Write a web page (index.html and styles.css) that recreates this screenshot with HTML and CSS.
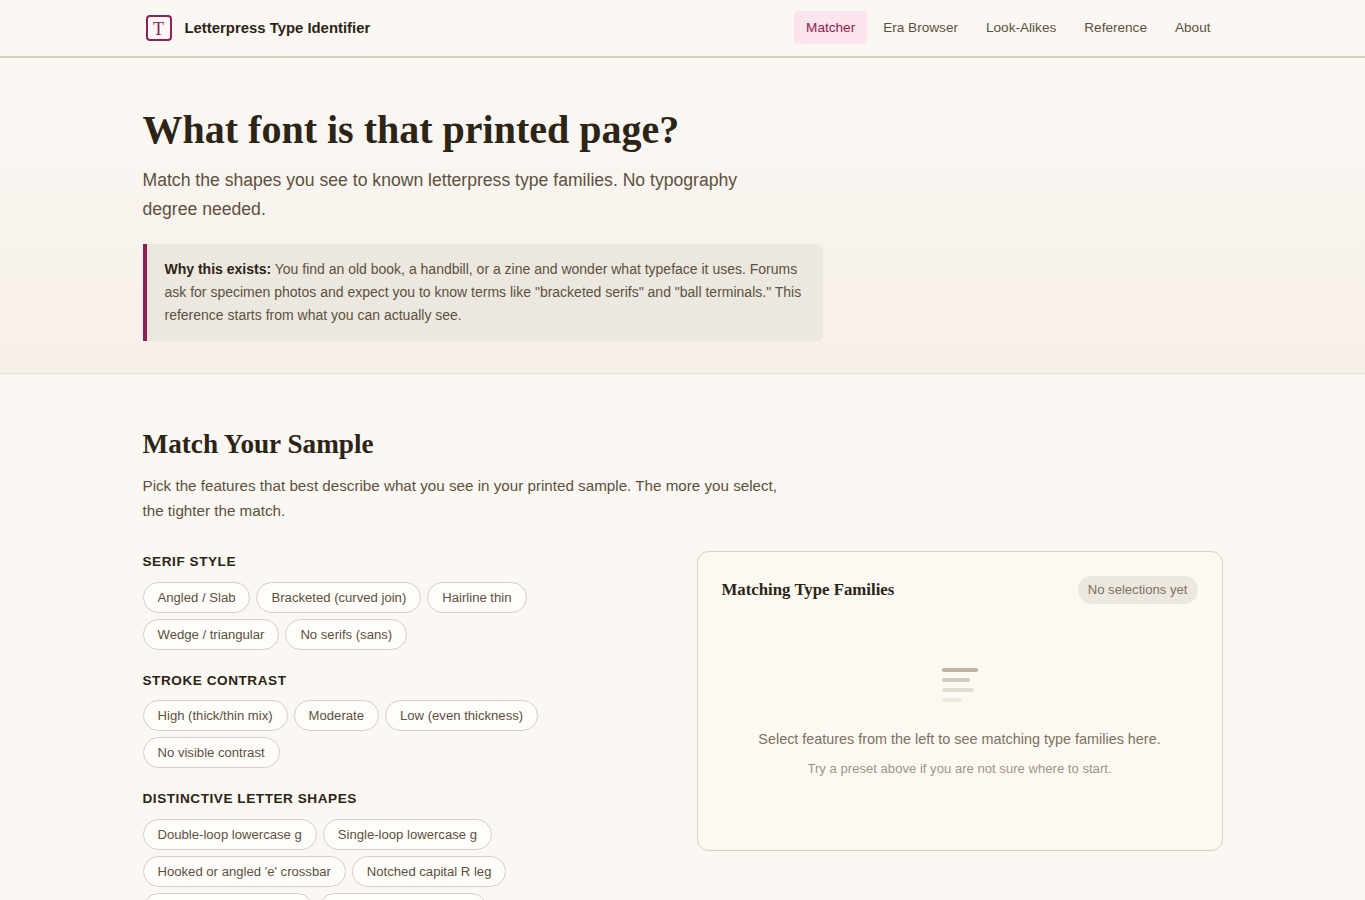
FILE: index.html
```html
<!DOCTYPE html>
<html lang="en">
<head>
    <meta charset="UTF-8">
    <meta name="viewport" content="width=device-width, initial-scale=1.0">
    <title>Letterpress Type Identifier</title>
    <link rel="stylesheet" href="styles.css">
</head>
<body>
    <header class="site-header">
        <div class="container header-inner">
            <a class="brand" href="#">
                <span class="brand-mark">T</span>
                <span class="brand-name">Letterpress Type Identifier</span>
            </a>
            <nav class="main-nav">
                <a class="nav-link active" href="#">Matcher</a>
                <a class="nav-link" href="#">Era Browser</a>
                <a class="nav-link" href="#">Look-Alikes</a>
                <a class="nav-link" href="#">Reference</a>
                <a class="nav-link" href="#">About</a>
            </nav>
        </div>
    </header>

    <section class="hero">
        <div class="container">
            <h1>What font is that printed page?</h1>
            <p class="hero-sub">Match the shapes you see to known letterpress type families. No typography degree needed.</p>
            <div class="callout">
                <strong>Why this exists:</strong> You find an old book, a handbill, or a zine and wonder what typeface it uses. Forums ask for specimen photos and expect you to know terms like "bracketed serifs" and "ball terminals." This reference starts from what you can actually see.
            </div>
        </div>
    </section>

    <main class="container matcher">
        <h2>Match Your Sample</h2>
        <p class="matcher-intro">Pick the features that best describe what you see in your printed sample. The more you select, the tighter the match.</p>

        <div class="matcher-grid">
            <div class="filters">
                <div class="filter-group">
                    <h3>Serif Style</h3>
                    <div class="pills">
                        <button class="pill">Angled / Slab</button>
                        <button class="pill">Bracketed (curved join)</button>
                        <button class="pill">Hairline thin</button>
                        <button class="pill">Wedge / triangular</button>
                        <button class="pill">No serifs (sans)</button>
                    </div>
                </div>
                <div class="filter-group">
                    <h3>Stroke Contrast</h3>
                    <div class="pills">
                        <button class="pill">High (thick/thin mix)</button>
                        <button class="pill">Moderate</button>
                        <button class="pill">Low (even thickness)</button>
                        <button class="pill">No visible contrast</button>
                    </div>
                </div>
                <div class="filter-group">
                    <h3>Distinctive Letter Shapes</h3>
                    <div class="pills">
                        <button class="pill">Double-loop lowercase g</button>
                        <button class="pill">Single-loop lowercase g</button>
                        <button class="pill">Hooked or angled 'e' crossbar</button>
                        <button class="pill">Notched capital R leg</button>
                        <button class="pill">Ball terminals (a, c, g, s)</button>
                        <button class="pill">Tall ascenders on d, f, k</button>
                    </div>
                </div>
            </div>

            <aside class="results">
                <div class="results-head">
                    <h3>Matching Type Families</h3>
                    <span class="results-badge">No selections yet</span>
                </div>
                <div class="results-empty">
                    <svg class="empty-icon" width="36" height="36" viewBox="0 0 36 36" aria-hidden="true">
                        <rect x="0" y="0" width="36" height="4" rx="2" fill="#bdb3a3"/>
                        <rect x="0" y="10" width="28" height="4" rx="2" fill="#d2ccc0"/>
                        <rect x="0" y="20" width="32" height="4" rx="2" fill="#e3ded2"/>
                        <rect x="0" y="30" width="20" height="4" rx="2" fill="#eee9e0"/>
                    </svg>
                    <p class="empty-main">Select features from the left to see matching type families here.</p>
                    <p class="empty-hint">Try a preset above if you are not sure where to start.</p>
                </div>
            </aside>
        </div>
    </main>
</body>
</html>
```

FILE: styles.css
```css
* {
    box-sizing: border-box;
}

body {
    margin: 0;
    font-family: "Liberation Sans", Arial, sans-serif;
    background-color: #fbf8f3;
    color: #2c2416;
}

.container {
    width: 1080px;
    margin: 0 auto;
}

.site-header {
    height: 58px;
    border-bottom: 2px solid #d4cfbb;
}

.header-inner {
    height: 55px;
    display: flex;
    align-items: center;
    justify-content: space-between;
}

.brand {
    display: flex;
    align-items: center;
    gap: 13px;
    color: #2c2416;
    text-decoration: none;
}

.brand-mark {
    width: 26px;
    height: 26px;
    margin-left: 3px;
    border: 2px solid #8b2252;
    border-radius: 4px;
    background-color: #fdf8f5;
    color: #8b2252;
    font-family: "Liberation Serif", serif;
    font-size: 18px;
    line-height: 24px;
    text-align: center;
}

.brand-name {
    font-size: 14.88px;
    font-weight: 700;
}

.main-nav {
    display: flex;
    gap: 4px;
}

.nav-link {
    padding: 8px 12px;
    border-radius: 4px;
    color: #5c5040;
    font-size: 13.6px;
    line-height: 17px;
    text-decoration: none;
}

.nav-link.active {
    background-color: #fce4ec;
    color: #8b2252;
}

.hero {
    height: 316px;
    padding-top: 48px;
    border-bottom: 1px solid #e6e1d8;
    background: linear-gradient(180deg, #fbf8f3 0%, #f7efe9 100%);
}

h1 {
    margin: 0 0 12px;
    font-family: "Liberation Serif", serif;
    font-size: 40px;
    line-height: 48px;
    font-weight: 700;
}

.hero-sub {
    max-width: 640px;
    margin: 0 0 20px;
    color: #5c5040;
    font-size: 17.6px;
    line-height: 29px;
}

.callout {
    width: 680px;
    padding: 14px 18px;
    border-left: 4px solid #8b2252;
    border-radius: 0 6px 6px 0;
    background-color: #ede8df;
    color: #5c5040;
    font-size: 14px;
    line-height: 23px;
}

.callout strong {
    color: #2c2416;
}

.matcher {
    padding-top: 52px;
}

h2 {
    margin: 0 0 11px;
    font-family: "Liberation Serif", serif;
    font-size: 27.2px;
    line-height: 36px;
    font-weight: 700;
}

.matcher-intro {
    max-width: 640px;
    margin: 0 0 28px;
    color: #5c5040;
    font-size: 15.2px;
    line-height: 25px;
}

.matcher-grid {
    display: grid;
    grid-template-columns: 1fr 1fr;
    gap: 28px;
    align-items: start;
}

.filter-group {
    margin-bottom: 20px;
}

.filter-group h3 {
    margin: 0 0 8.6px;
    font-size: 13.6px;
    line-height: 22px;
    font-weight: 700;
    letter-spacing: 0.54px;
    text-transform: uppercase;
}

.pills {
    display: flex;
    flex-wrap: wrap;
    gap: 6px;
}

.pill {
    height: 31px;
    padding: 0 14px;
    border: 1px solid #d4cfc4;
    border-radius: 16px;
    background-color: #fffdfa;
    color: #5c5040;
    font-family: inherit;
    font-size: 13.12px;
    cursor: pointer;
}

.results {
    height: 300px;
    padding: 24px;
    border: 1px solid #d6d0c4;
    border-radius: 12px;
    background-color: #fcf9f3;
}

.results-head {
    display: flex;
    align-items: center;
    justify-content: space-between;
}

.results-head h3 {
    margin: 0;
    font-family: "Liberation Serif", serif;
    font-size: 16.8px;
    font-weight: 700;
}

.results-badge {
    padding: 6px 10px;
    border-radius: 14px;
    background-color: #ede8df;
    color: #7d7060;
    font-size: 13.12px;
    line-height: 16px;
}

.results-empty {
    padding-top: 64px;
    text-align: center;
}

.empty-icon {
    display: block;
    margin: 0 auto 24px;
}

.empty-main {
    margin: 0 0 8px;
    color: #7d7060;
    font-size: 14.4px;
    line-height: 23px;
}

.empty-hint {
    margin: 0;
    color: #a09484;
    font-size: 13.12px;
    line-height: 20px;
}
```
